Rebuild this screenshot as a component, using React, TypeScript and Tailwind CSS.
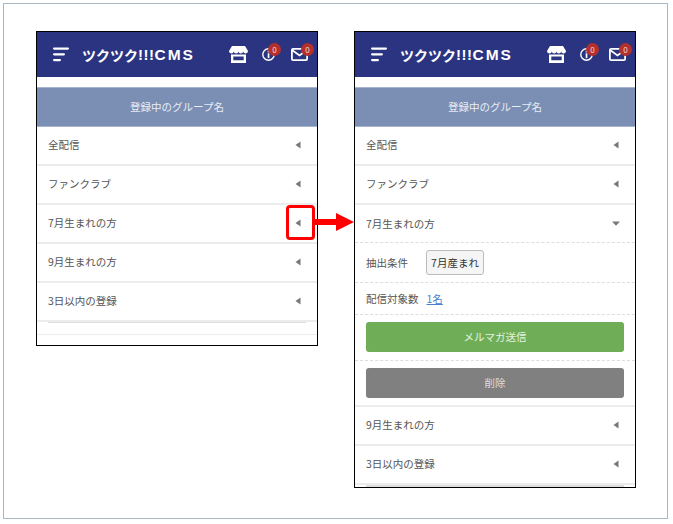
const font = { fontFamily: '"Noto Sans CJK JP", "Liberation Sans", sans-serif' };
const latin = { fontFamily: '"Liberation Sans", sans-serif' };

const LeftArrow = () => (
  <svg width="6" height="8" viewBox="0 0 6 8" className="block">
    <path d="M5.500 0.500v7L0.500 4z" fill="#777" />
  </svg>
);

const DownArrow = () => (
  <svg width="8" height="5" viewBox="0 0 8 5" className="block">
    <path d="M0 0.500h8L4 4.800z" fill="#777" />
  </svg>
);

const Badge = () => (
  <span className="absolute -top-[5px] -right-[6px] w-[13px] h-[13px] rounded-full bg-[#b3302c] text-[#f3d9d8] text-[8px] leading-[13px] text-center">
    0
  </span>
);

const Header = () => (
  <div className="h-[45px] bg-[#2b3481] flex items-center pl-[16px] shrink-0">
    <svg width="16" height="15" viewBox="0 0 16 15" className="block shrink-0">
      <rect x="0" y="0.500" width="16" height="2.200" rx="1.100" fill="#fff" />
      <rect x="0" y="6.200" width="12" height="2.200" rx="1.100" fill="#fff" />
      <rect x="0" y="12" width="8" height="2.200" rx="1.100" fill="#fff" />
    </svg>
    <span className="ml-[13px] w-[117px] text-white leading-none font-bold whitespace-nowrap flex items-center">
      <span className="text-[14px]">ツクツク</span>
      <span className="text-[15px] tracking-[0.5px]" style={latin}>!!!</span>
      <span className="text-[15.500px] tracking-[2px]" style={latin}>CMS</span>
    </span>
    <svg width="19" height="17" viewBox="0 0 19 17" className="block ml-[30px] shrink-0">
      <path d="M3 0h13l3 5c0 1.500-1.200 2.500-2.400 2.500S14.400 6.500 14.200 5.500c-.2 1-1.200 2-2.400 2S9.700 6.500 9.500 5.500c-.2 1-1.100 2-2.300 2S5 6.500 4.800 5.500c-.2 1-1.200 2-2.400 2S0 6.500 0 5z" fill="#fff" />
      <path d="M2 8.500h15V17H2zM4.300 10.500v3.800h10.400v-3.800z" fill="#fff" fillRule="evenodd" />
    </svg>
    <div className="relative ml-[14px] w-[13px] h-[13px] shrink-0">
      <svg width="13" height="13" viewBox="0 0 13 13" className="block">
        <circle cx="6.500" cy="6.500" r="5.700" fill="none" stroke="#fff" strokeWidth="1.400" />
        <rect x="5.700" y="5.300" width="1.700" height="4.800" fill="#fff" />
        <rect x="5.700" y="2.700" width="1.700" height="1.700" fill="#fff" />
      </svg>
      <Badge />
    </div>
    <div className="relative ml-[16px] w-[17px] h-[13px] shrink-0">
      <svg width="17" height="13" viewBox="0 0 17 13" className="block">
        <rect x="0.900" y="0.900" width="15.200" height="11.200" rx="1.200" fill="none" stroke="#fff" strokeWidth="1.800" />
        <path d="M1 2l7.500 5.500L16 2" fill="none" stroke="#fff" strokeWidth="1.800" />
      </svg>
      <Badge />
    </div>
  </div>
);

const Title = () => (
  <div className="mt-[10px] h-[40px] pb-[1px] bg-[#7b8fb5] border-y border-[#a6b4cf] flex items-center justify-center text-[10.500px] text-[#e8ecf3] shrink-0">
    登録中のグループ名
  </div>
);

const Row = ({ label, open }: { label: string; open?: boolean }) => (
  <div
    className={`shrink-0 flex items-center justify-between pl-[11px] pr-[16px] text-[10.500px] text-[#555] ${
      open ? "h-[38px] border-b border-dashed border-[#ddd]" : "h-[39px] pb-[1px] border-b-2 border-[#ececec]"
    }`}
  >
    <span>{label}</span>
    {open ? (
      <span className="-mr-[1px]">
        <DownArrow />
      </span>
    ) : (
      <LeftArrow />
    )}
  </div>
);

const Phone = ({ children, height }: { children: React.ReactNode; height: string }) => (
  <div className={`w-[282px] ${height} border border-black bg-white flex flex-col overflow-hidden`}>
    {children}
  </div>
);

export default function App() {
  return (
    <div className="relative w-[673px] h-[524px] bg-white p-[3px]" style={font}>
      <div className="w-[665px] h-[516px] border border-[#aab5c6] flex items-start gap-[36px] pl-[32px] pt-[27px]">
        <Phone height="h-[315px]">
          <Header />
          <Title />
          <Row label="全配信" />
          <Row label="ファンクラブ" />
          <Row label="7月生まれの方" />
          <Row label="9月生まれの方" />
          <Row label="3日以内の登録" />
          <div className="mx-[11px] h-[1px] bg-[#ddd] shrink-0" />
          <div className="mt-[11px] h-[1px] bg-[#ececec] shrink-0" />
        </Phone>
        <Phone height="h-[457px]">
          <Header />
          <Title />
          <Row label="全配信" />
          <Row label="ファンクラブ" />
          <Row label="7月生まれの方" open />
          <div className="h-[40px] shrink-0 flex items-center pl-[11px] text-[10.500px] text-[#555] border-b border-dashed border-[#ddd]">
            <span>抽出条件</span>
            <span className="ml-[18px] h-[25px] w-[58px] flex items-center justify-center bg-[#f5f5f5] border border-[#bbb] rounded-[3px] text-[#333]">
              7月産まれ
            </span>
          </div>
          <div className="h-[32px] shrink-0 flex items-center pl-[11px] text-[10.500px] text-[#555] border-b border-dashed border-[#ddd]">
            <span>配信対象数</span>
            <span className="ml-[8px] text-[#4a7fd0] underline">1名</span>
          </div>
          <div className="h-[46px] shrink-0 px-[11px] pt-[7px] border-b border-dashed border-[#ddd]">
            <div className="h-[30px] rounded-[3px] bg-[#6fae57] flex items-center justify-center text-[10.500px] text-[#e6f2e0]">
              メルマガ送信
            </div>
          </div>
          <div className="h-[46px] shrink-0 px-[11px] pt-[7px] border-b-2 border-[#ececec]">
            <div className="h-[30px] rounded-[3px] bg-[#808080] flex items-center justify-center text-[10.500px] text-[#ddd]">
              削除
            </div>
          </div>
          <Row label="9月生まれの方" />
          <Row label="3日以内の登録" />
          <div className="mx-[11px] h-[2px] bg-[#ddd] shrink-0" />
        </Phone>
      </div>
      {/* callout over the left phone */}
      <div className="absolute left-[286px] top-[205px] w-[29px] h-[35px] border-[3px] border-[#ff0000] rounded-[4px]" />
      <svg width="39" height="18" viewBox="0 0 39 18" className="absolute left-[315px] top-[213px]">
        <path d="M0 6h21V0l18 9-18 9v-6H0z" fill="#ff0000" />
      </svg>
    </div>
  );
}
